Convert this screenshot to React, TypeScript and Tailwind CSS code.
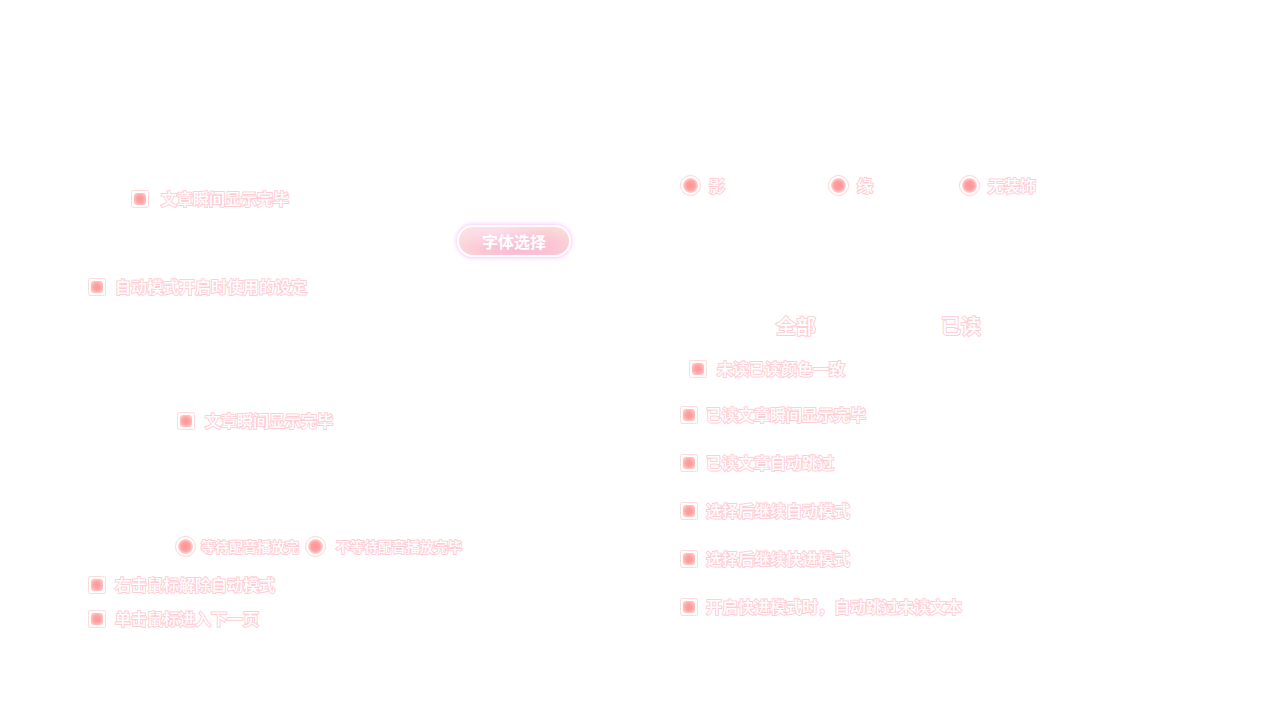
import type { ReactNode } from "react";

const outlined =
  "font-medium text-white [-webkit-text-stroke:2px_#ffcdd4] [paint-order:stroke_fill] whitespace-nowrap";

function Check({ children, className = "gap-2" }: { children: ReactNode; className?: string }) {
  return (
    <label className={`flex h-6 items-center text-base ${outlined} ${className}`}>
      <input
        type="checkbox"
        className="grid size-[18px] shrink-0 appearance-none place-items-center rounded-xs border border-[#ffdddb] bg-white before:size-3 before:rounded-[3px] before:bg-[radial-gradient(circle,#ff9696_0%,#ffa3a3_40%,#ffdada_100%)]"
      />
      <span className="pb-0.5">{children}</span>
    </label>
  );
}

function Choice({ name, children, className = "" }: { name: string; children: ReactNode; className?: string }) {
  return (
    <label className={`flex h-6 items-center ${outlined} ${className}`}>
      <input
        type="radio"
        name={name}
        className="grid size-[21px] shrink-0 appearance-none place-items-center rounded-full border border-[#ffd3d3] bg-white before:size-[15px] before:rounded-full before:bg-[radial-gradient(circle_closest-side,#ff9494_0%,#ffa0a0_60%,#ffd6d6_100%)]"
      />
      <span>{children}</span>
    </label>
  );
}

export default function App() {
  return (
    <main className="grid min-h-screen grid-cols-2 bg-white font-['Noto_Sans_CJK_SC',sans-serif]">
      <section className="flex flex-col pt-[187px] pl-[88px]">
        <Check className="ml-[43px] gap-3">文章瞬间显示完毕</Check>
        <button
          type="button"
          className="mt-[14px] mr-[69px] flex h-8 w-[114px] items-center justify-center self-end rounded-full border-2 border-white bg-[radial-gradient(ellipse_at_30%_0%,#fde0f0_0%,transparent_50%),radial-gradient(ellipse_at_55%_75%,#fabcd3_0%,#fac6d4_40%,#fbdfda_80%)] bg-origin-border text-base font-bold text-white shadow-[0_0_4px_1px_#fbc8fb]"
        >
          字体选择
        </button>
        <Check className="mt-[18px] gap-[9px]">自动模式开启时使用的设定</Check>
        <Check className="mt-[110px] ml-[89px] gap-[10px]">文章瞬间显示完毕</Check>
        <div className="mt-[101px] ml-[87px] flex gap-[6px] text-sm">
          <Choice name="voice" className="gap-[5px]">等待配音播放完</Choice>
          <Choice name="voice" className="gap-[10px]">不等待配音播放完毕</Choice>
        </div>
        <Check className="mt-[15px] gap-[9px]">右击鼠标解除自动模式</Check>
        <Check className="mt-[10px] gap-[9px]">单击鼠标进入下一页</Check>
      </section>

      <section className="flex flex-col pt-[173px] pl-10">
        <div className="flex text-base">
          <Choice name="decoration" className="w-[148px] gap-2">影</Choice>
          <Choice name="decoration" className="w-[131px] gap-2">缘</Choice>
          <Choice name="decoration" className="gap-2">无装饰</Choice>
        </div>
        <div className={`mt-[115px] ml-24 flex gap-[125px] text-xl leading-7 ${outlined}`}>
          <h2>全部</h2>
          <h2>已读</h2>
        </div>
        <Check className="mt-[17px] ml-[9px] gap-[10px]">未读已读颜色一致</Check>
        <div className="mt-[22px] flex flex-col gap-6">
          <Check>已读文章瞬间显示完毕</Check>
          <Check>已读文章自动跳过</Check>
          <Check>选择后继续自动模式</Check>
          <Check>选择后继续快进模式</Check>
          <Check>开启快进模式时，自动跳过未读文本</Check>
        </div>
      </section>
    </main>
  );
}
